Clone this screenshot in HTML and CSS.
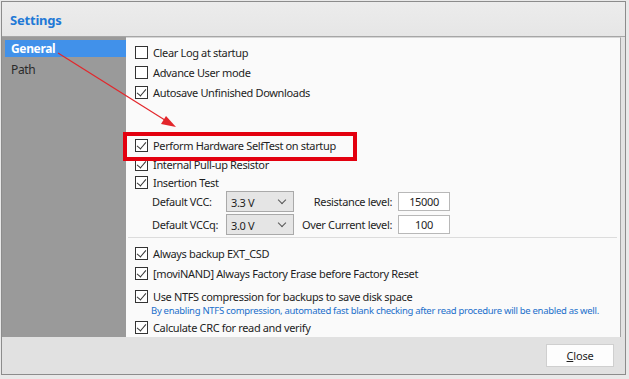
FILE: index.html
```html
<!DOCTYPE html>
<html>

<head>
    <title>Settings</title>
    <meta charset="utf-8">
    <link rel="stylesheet" href="styles.css">
</head>

<body>
    <div class="window">
        <div class="titlebar">Settings</div>
        <div class="main">
            <nav class="sidebar">
                <div class="nav-item valgt">General</div>
                <div class="nav-item">Path</div>
            </nav>
            <section class="panel">
                <label class="row"><span class="box"></span>Clear Log at startup</label>
                <label class="row"><span class="box"></span>Advance User mode</label>
                <label class="row"><span class="box checked"></span>Autosave Unfinished Downloads</label>

                <div class="group">
                    <label class="row tight"><span class="box checked"></span>Perform Hardware SelfTest on startup</label>
                    <label class="row tight"><span class="box checked"></span>Internal Pull-up Resistor</label>
                    <label class="row tight short"><span class="box checked"></span>Insertion Test</label>

                    <div class="field-row">
                        <span class="field-label">Default VCC:</span>
                        <div class="combo">3.3 V<span class="chevron"></span></div>
                        <span class="level-label">Resistance level:</span>
                        <div class="input">15000</div>
                    </div>
                    <div class="field-row">
                        <span class="field-label">Default VCCq:</span>
                        <div class="combo">3.0 V<span class="chevron"></span></div>
                        <span class="level-label">Over Current level:</span>
                        <div class="input">100</div>
                    </div>
                </div>

                <hr class="skille">

                <label class="row"><span class="box checked"></span>Always backup EXT_CSD</label>
                <label class="row"><span class="box checked"></span>[moviNAND] Always Factory Erase before Factory Reset</label>

                <label class="row ntfs"><span class="box checked"></span>Use NTFS compression for backups to save disk space</label>
                <p class="note">By enabling NTFS compression, automated fast blank checking after read procedure will be enabled as well.</p>
                <label class="row"><span class="box checked"></span>Calculate CRC for read and verify</label>
            </section>
        </div>
        <div class="footer">
            <button class="close"><u>C</u>lose</button>
        </div>
    </div>

    <!-- markering og pil oven på dialogen -->
    <div class="highlight"></div>
    <svg class="arrow" width="629" height="379" viewBox="0 0 629 379">
        <line x1="58" y1="53" x2="168" y2="122" stroke="#e3262b" stroke-width="1.2" />
        <polygon points="176,127 161,124 166,116" fill="#e3262b" />
    </svg>
</body>

</html>
```

FILE: styles.css
```css
body {
    margin: 0;
    background-color: #e9e9e9;
    font-family: 'Noto Sans', 'Open Sans', sans-serif;
    font-size: 11px;
    letter-spacing: -0.35px;
    color: #1e1e1e;
    position: relative;
    width: 629px;
    height: 379px;
    overflow: hidden;
}

.window {
    margin: 1px 0 0 1px;
    width: 623px;
    height: 372px;
    border: 1px solid #8c8c8c;
    background-color: #e2e2e2;
    display: flex;
    flex-direction: column;
}

.titlebar {
    height: 35px;
    flex: none;
    box-sizing: border-box;
    padding: 9px 0 0 8px;
    background: linear-gradient(#ececec, #e6e6e6);
    border-bottom: 1px solid #a6a6a6;
    color: #1f79d6;
    font-weight: bold;
    font-size: 13px;
    letter-spacing: -0.2px;
}

.main {
    height: 300px;
    flex: none;
    display: flex;
}

.sidebar {
    width: 124px;
    flex: none;
    background-color: #9a9a9a;
    padding-top: 3px;
    box-sizing: border-box;
}

.nav-item {
    height: 17px;
    line-height: 17px;
    padding-left: 6px;
    margin-left: 3px;
    font-size: 12px;
    color: #2a2a2a;
}

.nav-item.valgt {
    background-color: #4191ea;
    color: white;
    font-weight: bold;
    margin-bottom: 4px;
}

.panel {
    width: 495px;
    flex: none;
    box-sizing: border-box;
    background-color: #fafafa;
    border-top: 1px solid #d6d6d6;
    border-right: 1px solid #a3a3a3;
    padding: 4px 0 0 9px;
}

.row {
    display: flex;
    align-items: center;
    height: 20px;
    white-space: nowrap;
}

.row.tight {
    height: 19px;
}

.row.short {
    height: 17px;
}

.box {
    width: 13px;
    height: 13px;
    box-sizing: border-box;
    border: 1px solid #333;
    background-color: #fff;
    margin-right: 5px;
    flex: none;
    position: relative;
}

.box.checked::after {
    content: "";
    position: absolute;
    left: 3px;
    top: 0px;
    width: 4px;
    height: 8px;
    border-right: 1px solid #333;
    border-bottom: 1px solid #333;
    transform: rotate(40deg);
}

.group {
    margin-top: 34px;
}

.field-row {
    display: flex;
    align-items: center;
    height: 21px;
    margin-top: 2px;
    padding-left: 17px;
    white-space: nowrap;
}

.group .short + .field-row {
    margin-top: 0;
}

.field-label {
    width: 74px;
    flex: none;
}

.combo {
    width: 68px;
    height: 21px;
    flex: none;
    box-sizing: border-box;
    border: 1px solid #a9a9a9;
    background-color: #e5e5e5;
    padding: 3px 0 0 4px;
    position: relative;
}

.chevron {
    position: absolute;
    right: 8px;
    top: 5px;
    width: 5px;
    height: 5px;
    border-right: 1px solid #555;
    border-bottom: 1px solid #555;
    transform: rotate(45deg);
}

.level-label {
    width: 98px;
    flex: none;
    text-align: right;
    padding-right: 6px;
}

.input {
    width: 52px;
    height: 19px;
    flex: none;
    box-sizing: border-box;
    border: 1px solid #b8b8b8;
    background-color: #fff;
    text-align: center;
    line-height: 17px;
}

.skille {
    border: none;
    border-top: 1px solid #dcdcdc;
    margin: 2px 3px 5px -7px;
}

.row.ntfs {
    margin-top: 4px;
    height: 18px;
}

.note {
    margin: 0 0 0 16px;
    height: 12px;
    line-height: 12px;
    font-size: 9.5px;
    letter-spacing: -0.3px;
    color: #1a6fcb;
    white-space: nowrap;
}

.footer {
    flex: 1;
    display: flex;
    justify-content: flex-end;
    align-items: flex-start;
    padding: 7px 11px 0 0;
    background-color: #e1e1e1;
}

.close {
    width: 68px;
    height: 23px;
    border: 1px solid #cfcfcf;
    background-color: #fdfdfd;
    font-family: 'Noto Sans', sans-serif;
    font-size: 11px;
    letter-spacing: -0.2px;
    color: #1e1e1e;
    padding: 0;
}

.highlight {
    position: absolute;
    left: 123px;
    top: 132px;
    width: 234px;
    height: 29px;
    box-sizing: border-box;
    border: 4px solid #e3000f;
}

.arrow {
    position: absolute;
    left: 0;
    top: 0;
}
```
